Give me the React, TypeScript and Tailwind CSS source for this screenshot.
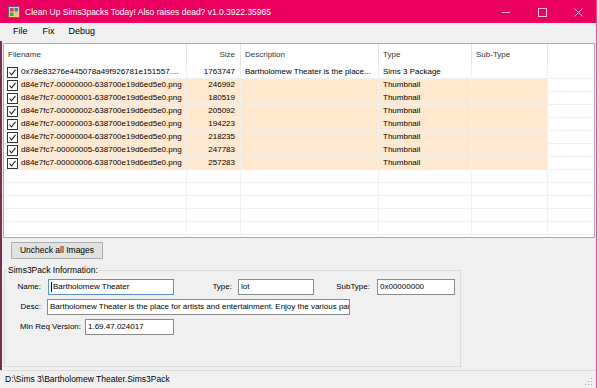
import React from "react";

const rows = [
  { name: "0x78e83276e445078a49f926781e151557....", size: "1763747", desc: "Bartholomew Theater is the place...", type: "Sims 3 Package", hl: false },
  { name: "d84e7fc7-00000000-638700e19d6ed5e0.png", size: "246992", desc: "", type: "Thumbnail", hl: true },
  { name: "d84e7fc7-00000001-638700e19d6ed5e0.png", size: "180519", desc: "", type: "Thumbnail", hl: true },
  { name: "d84e7fc7-00000002-638700e19d6ed5e0.png", size: "205092", desc: "", type: "Thumbnail", hl: true },
  { name: "d84e7fc7-00000003-638700e19d6ed5e0.png", size: "194223", desc: "", type: "Thumbnail", hl: true },
  { name: "d84e7fc7-00000004-638700e19d6ed5e0.png", size: "218235", desc: "", type: "Thumbnail", hl: true },
  { name: "d84e7fc7-00000005-638700e19d6ed5e0.png", size: "247783", desc: "", type: "Thumbnail", hl: true },
  { name: "d84e7fc7-00000006-638700e19d6ed5e0.png", size: "257283", desc: "", type: "Thumbnail", hl: true },
];

function Check() {
  return (
    <div className="w-[11px] h-[11px] border border-[#333] bg-white flex items-center justify-center shrink-0">
      <svg width="9" height="9" viewBox="0 0 9 9">
        <path d="M1.5 4.5 L3.5 6.8 L7.5 1.8" fill="none" stroke="#222" strokeWidth="1.1" />
      </svg>
    </div>
  );
}

function AppIcon() {
  return (
    <svg width="12" height="12" viewBox="0 0 12 12">
      <rect x="0.5" y="0.5" width="11" height="11" fill="#f4d36a" stroke="#6d5a8a" />
      <rect x="2" y="2" width="3.5" height="3.5" fill="#e23b3b" />
      <rect x="6.5" y="2" width="3.5" height="3.5" fill="#3a7bd5" />
      <rect x="2" y="6.5" width="3.5" height="3.5" fill="#3aa55a" />
      <rect x="6.5" y="6.5" width="3.5" height="3.5" fill="#c4c4d8" />
    </svg>
  );
}

function Input({ value, w, focus, caret }: { value: string; w: string; focus?: boolean; caret?: boolean }) {
  return (
    <div
      className={`${w} h-[16px] bg-white border ${focus ? "border-[#5a8fd4]" : "border-[#8a8a8a]"} flex items-center px-[2px] overflow-hidden whitespace-nowrap shrink-0`}
    >
      {caret && <span className="w-px h-[10px] bg-black mr-[1px] shrink-0" />}
      <span className="text-[8px]">{value}</span>
    </div>
  );
}

export default function App() {
  return (
    <div className="w-[599px] h-[388px] flex bg-[#d6dfe2] overflow-hidden font-['Liberation_Sans',sans-serif] text-black">
      <div className="w-[597px] h-full flex flex-col border-r border-[#e0558e]">
        {/* title bar */}
        <div className="h-[23px] bg-[#ec005f] flex items-center shrink-0 pt-px">
          <div className="ml-[8px] mr-[5px] flex">
            <AppIcon />
          </div>
          <span className="text-[8.5px] text-white">Clean Up Sims3packs Today! Also raises dead? v1.0.3922.35965</span>
          <div className="ml-auto flex items-center text-[#fbc3d7]">
            <div className="w-[36px] flex justify-center">
              <div className="w-[8px] h-px bg-[#fbc3d7]" />
            </div>
            <div className="w-[36px] flex justify-center">
              <div className="w-[9px] h-[9px] border border-[#fbc3d7]" />
            </div>
            <div className="w-[36px] flex justify-center">
              <svg width="9" height="9" viewBox="0 0 9 9">
                <path d="M0.5 0.5 L8.5 8.5 M8.5 0.5 L0.5 8.5" stroke="#fbc3d7" strokeWidth="1" />
              </svg>
            </div>
          </div>
        </div>

        {/* menu */}
        <div className="h-[18px] bg-[#f0f0f0] flex items-center text-[9px] shrink-0">
          <span className="ml-[13px]">File</span>
          <span className="ml-[15px]">Fix</span>
          <span className="ml-[14px]">Debug</span>
        </div>

        <div className="flex flex-1 min-h-0">
          <div className="w-[2px] bg-[#763050] shrink-0" />
          <div className="flex-1 flex flex-col bg-[#f0f0f0] pt-[2px]">
            {/* list view */}
            <div className="ml-px mr-px h-[195px] bg-white border border-[#a9a9b3] text-[8px] flex flex-col overflow-hidden">
              <div className="h-[22px] flex items-center shrink-0 text-[#333]">
                <div className="w-[183px] h-full border-r border-[#e5e5e5] flex items-center pl-[4px]">Filename</div>
                <div className="w-[54px] h-full border-r border-[#e5e5e5] flex items-center justify-end pr-[5px]">Size</div>
                <div className="w-[138px] h-full border-r border-[#e5e5e5] flex items-center pl-[4px]">Description</div>
                <div className="w-[93px] h-full border-r border-[#e5e5e5] flex items-center pl-[4px]">Type</div>
                <div className="w-[76px] h-full border-r border-[#e5e5e5] flex items-center pl-[4px]">Sub-Type</div>
                <div className="flex-1" />
              </div>
              {rows.map((r, i) => (
                <div key={i} className="h-[13px] flex shrink-0 border-b border-[#f0f0f0] whitespace-nowrap">
                  <div className="w-[183px] flex items-center pl-[3px] border-r border-[#f0f0f0]">
                    <Check />
                    <div className={`flex-1 h-full flex items-center pl-[2px] ml-[1px] overflow-hidden ${r.hl ? "bg-[#ffe8cd]" : ""}`}>
                      {r.name}
                    </div>
                  </div>
                  <div className={`w-[54px] flex items-center justify-end pr-[5px] border-r border-[#f0f0f0] ${r.hl ? "bg-[#ffe8cd]" : ""}`}>{r.size}</div>
                  <div className={`w-[138px] flex items-center pl-[4px] border-r border-[#f0f0f0] overflow-hidden ${r.hl ? "bg-[#ffe8cd]" : ""}`}>{r.desc}</div>
                  <div className={`w-[93px] flex items-center pl-[4px] border-r border-[#f0f0f0] ${r.hl ? "bg-[#ffe8cd]" : ""}`}>{r.type}</div>
                  <div className={`w-[76px] border-r border-[#f0f0f0] ${r.hl ? "bg-[#ffe8cd]" : ""}`} />
                  <div className="flex-1" />
                </div>
              ))}
              {[0, 1, 2, 3, 4].map((i) => (
                <div key={i} className="h-[13px] flex shrink-0 border-b border-[#f0f0f0]">
                  <div className="w-[183px] border-r border-[#f0f0f0]" />
                  <div className="w-[54px] border-r border-[#f0f0f0]" />
                  <div className="w-[138px] border-r border-[#f0f0f0]" />
                  <div className="w-[93px] border-r border-[#f0f0f0]" />
                  <div className="w-[76px] border-r border-[#f0f0f0]" />
                  <div className="flex-1" />
                </div>
              ))}
            </div>

            {/* lower panel */}
            <div className="flex-1 flex flex-col">
              <button className="mt-[4px] ml-[9px] w-[92px] h-[17px] bg-[#e1e1e1] border border-[#adadad] text-[8.5px] flex items-center justify-center">
                Uncheck all Images
              </button>

              <div className="mt-[7px] ml-[2px] w-[457px] flex flex-col">
                <div className="h-[9px] flex items-center">
                  <div className="w-[3px] h-[5px] self-end border-t border-l border-[#dcdcdc]" />
                  <span className="text-[8.5px] px-px leading-none">Sims3Pack Information:</span>
                  <div className="flex-1 h-[5px] self-end border-t border-r border-[#dcdcdc]" />
                </div>
                <div className="h-[92px] border-l border-r border-b border-[#dcdcdc] flex flex-col gap-[4px] pt-[4px] text-[8px]">
                  <div className="flex items-center">
                    <span className="w-[36px] text-right">Name:</span>
                    <span className="w-[7px]" />
                    <Input value="Bartholomew Theater" w="w-[126px]" focus caret />
                    <span className="w-[58px] text-right">Type:</span>
                    <span className="w-[6px]" />
                    <Input value="lot" w="w-[76px]" />
                    <span className="w-[56px] text-right">SubType:</span>
                    <span className="w-[7px]" />
                    <Input value="0x00000000" w="w-[78px]" />
                  </div>
                  <div className="flex items-center">
                    <span className="w-[36px] text-right">Desc:</span>
                    <span className="w-[6px]" />
                    <Input value="Bartholomew Theater is the place for artists and entertainment. Enjoy the various parts of the theater" w="w-[303px]" />
                  </div>
                  <div className="flex items-center">
                    <span className="w-[76px] text-right">Min Req Version:</span>
                    <span className="w-[4px]" />
                    <Input value="1.69.47.024017" w="w-[89px]" />
                  </div>
                </div>
              </div>
            </div>
          </div>
        </div>

        {/* status bar */}
        <div className="h-[18px] bg-[#f0f0f0] border-t border-[#dadada] flex items-center shrink-0">
          <span className="ml-[5px] text-[8.5px]">D:\Sims 3\Bartholomew Theater.Sims3Pack</span>
          <div className="ml-auto mr-[3px] self-end mb-[2px]">
            <svg width="9" height="9" viewBox="0 0 9 9">
              <g fill="#a0a0a0">
                <rect x="7" y="1" width="1" height="1" />
                <rect x="4" y="4" width="1" height="1" />
                <rect x="7" y="4" width="1" height="1" />
                <rect x="1" y="7" width="1" height="1" />
                <rect x="4" y="7" width="1" height="1" />
                <rect x="7" y="7" width="1" height="1" />
              </g>
            </svg>
          </div>
        </div>
      </div>
    </div>
  );
}
